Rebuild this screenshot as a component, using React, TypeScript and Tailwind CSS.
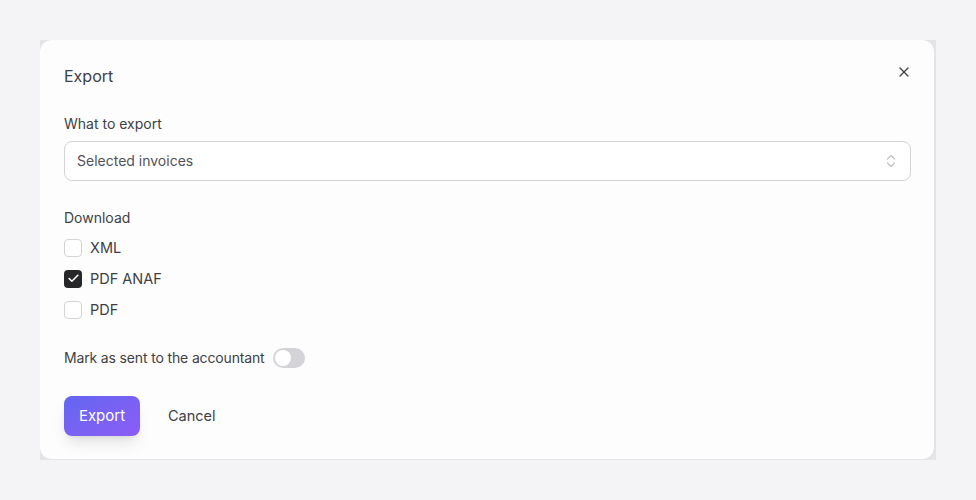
import { X, Check } from 'lucide-react'

function Box({ checked, label }: { checked?: boolean; label: string }) {
  return (
    <label className="flex h-[31px] items-center gap-2">
      <span
        className={
          checked
            ? 'flex h-[18px] w-[18px] items-center justify-center rounded-[4px] bg-[#27272a]'
            : 'h-[18px] w-[18px] rounded-[4px] border border-[#d4d4d8] bg-white'
        }
      >
        {checked && <Check className="h-[13px] w-[13px] text-white" strokeWidth={3} />}
      </span>
      <span className="text-[14.5px] text-[#3f3f46]">{label}</span>
    </label>
  )
}

export default function App() {
  return (
    <main className="min-h-[500px] bg-[#f4f4f6] p-10" style={{ fontFamily: 'Inter, "Noto Sans", sans-serif' }}>
      <div className="h-[420px] w-[896px] bg-[#e4e4e7]">
        <div className="mb-px mr-[2px] flex h-[419px] flex-col rounded-xl bg-[#fdfdfd] pl-6 pr-[23px] pt-6">
          <div className="flex items-start justify-between">
            <h1 className="text-base leading-6 text-[#3f3f46]">Export</h1>
            <X className="mr-[-1px] h-4 w-4 text-[#3f3f46]" strokeWidth={1.8} />
          </div>

          <p className="mt-[26px] text-sm leading-5 text-[#3f3f46]">What to export</p>
          <div className="mt-[7px] flex h-10 items-center justify-between rounded-lg border border-[#d4d4d8] bg-white pl-3 pr-[14px]">
            <span className="text-sm text-[#52525b]">Selected invoices</span>
            <svg width="10" height="16" viewBox="0 0 10 16" fill="none" stroke="#c4c4c8" strokeWidth="1.3" strokeLinecap="round" strokeLinejoin="round">
              <path d="M1.5 6 L5 2.5 L8.5 6" />
              <path d="M1.5 10 L5 13.5 L8.5 10" />
            </svg>
          </div>

          <p className="mt-[27px] text-sm leading-5 text-[#3f3f46]">Download</p>
          <div className="mt-[4px] flex flex-col">
            <Box label="XML" />
            <Box checked label="PDF ANAF" />
            <Box label="PDF" />
          </div>

          <div className="mt-[23px] flex items-center gap-2">
            <span className="text-sm tracking-[-0.15px] text-[#3f3f46]">Mark as sent to the accountant</span>
            <span className="flex h-5 w-8 items-center rounded-full bg-[#d4d4d8] px-[2px]">
              <span className="h-4 w-4 rounded-full bg-white" />
            </span>
          </div>

          <div className="mt-[28px] flex items-center gap-7">
            <button className="h-10 w-[76px] rounded-lg bg-gradient-to-br from-[#6366f1] to-[#8b5cf6] text-[15px] text-white shadow-lg shadow-black/10">
              Export
            </button>
            <button className="text-[14.5px] text-[#3f3f46]">Cancel</button>
          </div>
        </div>
      </div>
    </main>
  )
}
